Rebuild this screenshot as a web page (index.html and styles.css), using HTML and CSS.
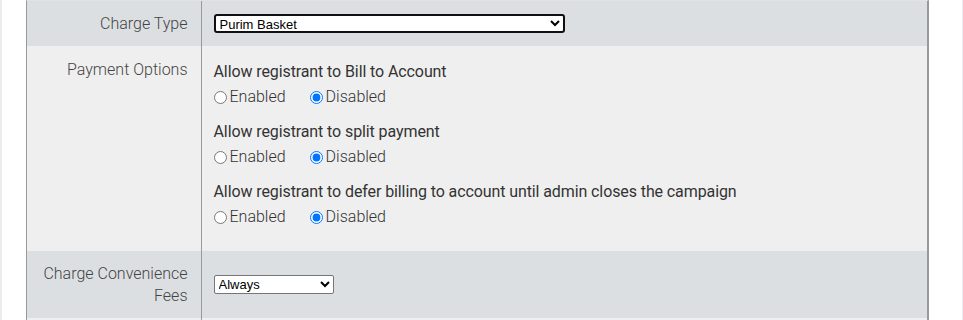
FILE: index.html
```html
<!DOCTYPE html>
<html lang="en">
<head>
    <meta charset="UTF-8" />
    <meta name="viewport" content="width=device-width, initial-scale=1.0"/>
    <title>Campaign Settings</title>
    <link rel="stylesheet" href="styles.css">
</head>
<body>
<div class="page">
    <div class="panel">
        <table class="settings">
            <tr class="row-dark">
                <td class="label mid">Charge Type</td>
                <td class="field mid">
                    <select class="select-wide focused">
                        <option>Purim Basket</option>
                        <option>Donation</option>
                        <option>Registration</option>
                    </select>
                </td>
            </tr>
            <tr class="row-light">
                <td class="label top">Payment Options</td>
                <td class="field options">
                    <div class="option">
                        <div class="option-title">Allow registrant to Bill to Account</div>
                        <div class="radios">
                            <label><input type="radio" name="bill"> Enabled</label>
                            <label><input type="radio" name="bill" checked> Disabled</label>
                        </div>
                    </div>
                    <div class="option">
                        <div class="option-title">Allow registrant to split payment</div>
                        <div class="radios">
                            <label><input type="radio" name="split"> Enabled</label>
                            <label><input type="radio" name="split" checked> Disabled</label>
                        </div>
                    </div>
                    <div class="option">
                        <div class="option-title">Allow registrant to defer billing to account until admin closes the campaign</div>
                        <div class="radios">
                            <label><input type="radio" name="defer"> Enabled</label>
                            <label><input type="radio" name="defer" checked> Disabled</label>
                        </div>
                    </div>
                </td>
            </tr>
            <tr class="row-dark">
                <td class="label mid fees">Charge Convenience<br>Fees</td>
                <td class="field mid">
                    <select class="select-small">
                        <option>Always</option>
                        <option>Never</option>
                        <option>Optional</option>
                    </select>
                </td>
            </tr>
            <tr class="row-light">
                <td class="label spacer"></td>
                <td class="field spacer"></td>
            </tr>
        </table>
    </div>
</div>
</body>
</html>
```

FILE: styles.css
```css
* {
    margin: 0;
    padding: 0;
    box-sizing: border-box;
}

html, body {
    height: 100%;
    overflow: hidden;
}

body {
    background-color: #ececf0;
    font-family: Roboto, "Liberation Sans", sans-serif;
    color: #333;
}

.page {
    margin-left: 2px;
    width: 960px;
    height: 100%;
    background-color: white;
    padding-left: 24px;
}

.panel {
    width: 903px;
    border-left: 1px solid #999;
    border-right: 2px solid #999;
    border-top: 1px solid #e2e2e2;
}

.settings {
    width: 100%;
    border-collapse: collapse;
}

.row-dark {
    background-color: #dcdfe2;
}

.row-light {
    background-color: #efefef;
}

.label {
    width: 174px;
    border-right: 1px solid #999;
    text-align: right;
    padding-right: 13px;
    font-size: 16px;
    font-weight: 300;
    line-height: 22px;
    color: #444;
}

.field {
    padding-left: 12px;
}

.mid {
    vertical-align: middle;
}

.top {
    vertical-align: top;
    padding-top: 13px;
}

tr.row-dark:first-child td {
    height: 45px;
}

.fees {
    height: 67px;
    padding-top: 1px;
}

.spacer {
    height: 20px;
}

.options {
    padding-top: 16px;
    padding-bottom: 9px;
    vertical-align: top;
}

.option {
    margin-bottom: 15px;
}

.option-title {
    font-size: 16px;
    line-height: 20px;
    letter-spacing: -0.1px;
    color: #333;
}

.radios {
    margin-top: 5px;
    display: flex;
    gap: 24px;
    font-size: 16px;
    line-height: 20px;
    font-weight: 300;
    color: #333;
}

.radios label {
    display: flex;
    align-items: center;
    gap: 3px;
}

.radios input {
    margin: 0;
    width: 13px;
    height: 13px;
}

select {
    font-family: Arial, "Liberation Sans", sans-serif;
    font-size: 13px;
    color: #000;
    background-color: white;
    height: 19px;
    display: block;
}

.select-wide {
    width: 351px;
    border: 2px solid #101010;
    border-radius: 3px;
}

.select-small {
    width: 120px;
    border: 1px solid #767676;
    border-radius: 2px;
}
```
